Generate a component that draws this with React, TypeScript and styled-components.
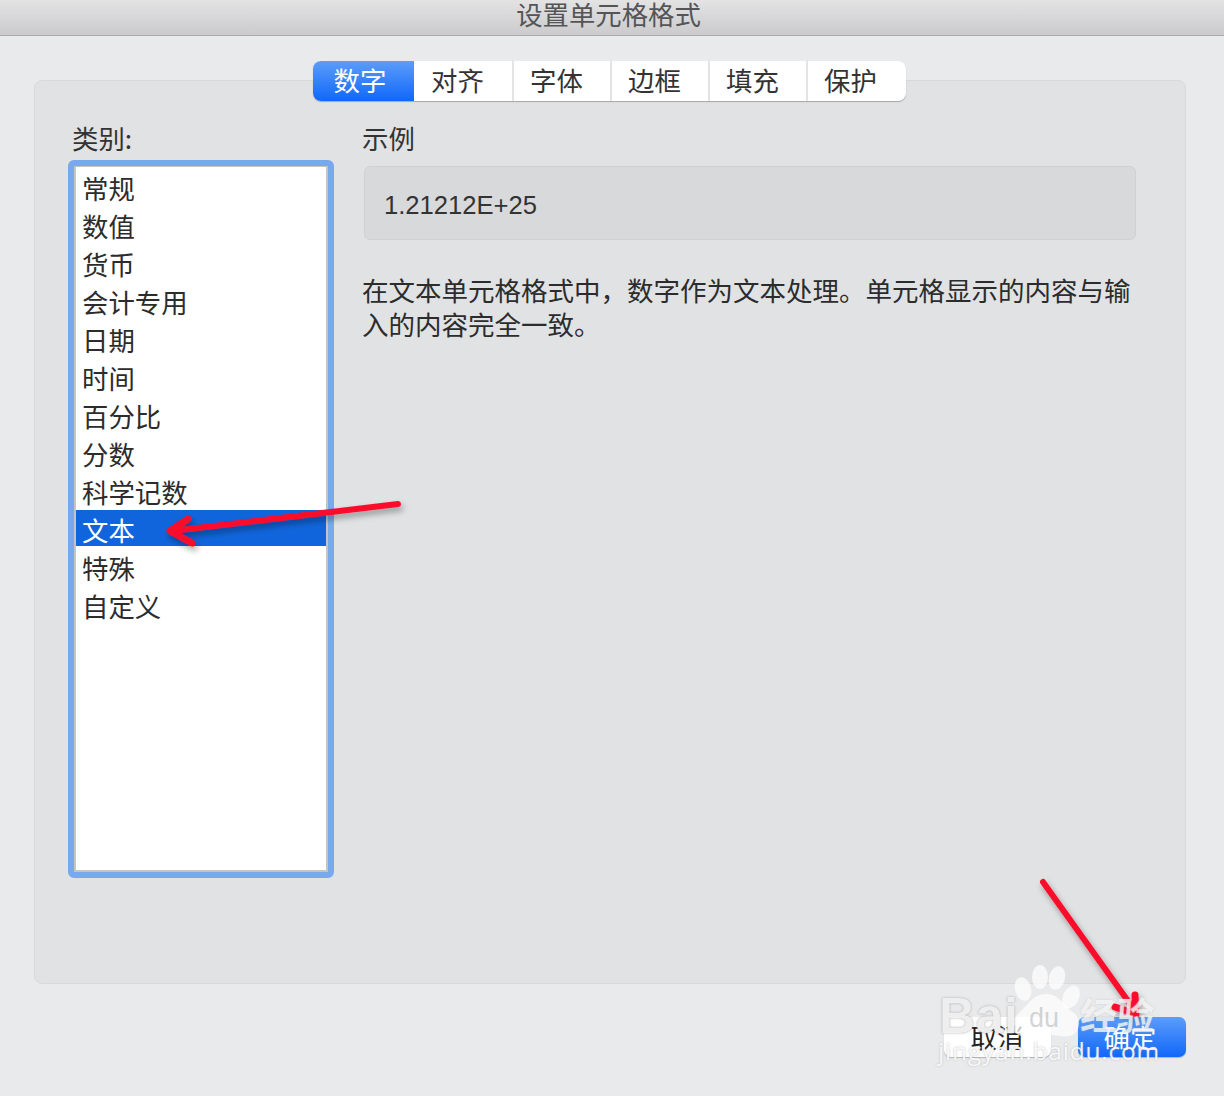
import React from "react";
import styled, { createGlobalStyle } from "styled-components";

const CJK = `"Noto Sans CJK SC", "Noto Sans", sans-serif`;

const Global = createGlobalStyle`
  html, body { margin: 0; padding: 0; background: #e9eaec; }
  body { font-family: "Liberation Sans", ${CJK}; color: #2a2a2a; }
`;

const Page = styled.div`
  position: relative;
  width: 1224px;
  height: 1096px;
  overflow: hidden;
  background: #e9eaec;
`;

const TitleBar = styled.header`
  height: 35px;
  padding-right: 7px;
  border-bottom: 1px solid #a9a9aa;
  background: linear-gradient(#e3e3e4, #cbcbcd);
  display: flex;
  justify-content: center;
  align-items: flex-start;
  font: 26.4px/28px ${CJK};
  color: #555557;
`;

const Content = styled.div`
  padding: 25px 38px 0 34px;
`;

const Tabs = styled.nav`
  position: relative;
  z-index: 1;
  width: 593px;
  height: 40px;
  margin-left: 279px;
  display: flex;
  border-radius: 8px;
  background: #fff;
  box-shadow: 0 1px 1px 0 #a8a8a8;
`;

const Tab = styled.div<{ $active?: boolean; $w: number }>`
  width: ${(p) => p.$w}px;
  box-sizing: border-box;
  display: flex;
  align-items: center;
  justify-content: center;
  padding: 0 ${(p) => (p.$active ? 7 : 11)}px 3px 0;
  font: 26.4px/34px ${CJK};
  color: ${(p) => (p.$active ? "#fff" : "#333")};
  background: ${(p) => (p.$active ? "linear-gradient(#5c9dfa, #1067f9)" : "transparent")};
  border-radius: ${(p) => (p.$active ? "8px 0 0 8px" : "0")};
  border-right: ${(p) => (p.$active ? "none" : "2px solid #e4e4e5")};
  &:last-child { border-right: none; padding-right: 13px; }
`;

const Panel = styled.section`
  margin-top: -21px;
  width: 1152px;
  height: 904px;
  box-sizing: border-box;
  background: #e1e2e4;
  border: 1px solid #d8d9db;
  border-radius: 8px;
  padding: 42px 49px 0 33px;
  display: flex;
`;

const LeftColumn = styled.div`
  width: 266px;
  flex: none;
  margin-right: 28px;
`;

const Label = styled.div`
  font: 26.4px/30px ${CJK};
  color: #333;
  padding-left: 4px;
  height: 37px;
`;

const ListBox = styled.div`
  width: 266px;
  height: 718px;
  box-sizing: border-box;
  border: 6px solid #7aa8ee;
  border-radius: 6px;
`;

const ListInner = styled.div`
  height: 100%;
  box-sizing: border-box;
  background: #fff;
  border: 2px solid #c4c4c4;
  border-top-width: 1px;
`;

const Row = styled.div<{ $selected?: boolean }>`
  height: 38px;
  box-sizing: border-box;
  border-top: 1px solid transparent;
  border-bottom: 1px solid transparent;
  background-clip: padding-box;
  padding: 3px 0 0 6px;
  font: 26.4px/33px ${CJK};
  color: ${(p) => (p.$selected ? "#fff" : "#2c2c2c")};
  background-color: ${(p) => (p.$selected ? "#1165dc" : "transparent")};
`;

const RightColumn = styled.div`
  width: 774px;
  flex: none;
`;

const SampleLabel = styled(Label)`
  padding-left: 0;
  height: 43px;
`;

const SampleBox = styled.div`
  margin-left: 2px;
  height: 74px;
  box-sizing: border-box;
  background: #d8d9db;
  border: 1px solid #d0d1d3;
  border-radius: 6px;
  padding: 4px 0 0 19px;
  display: flex;
  align-items: center;
  font: 25.6px/30px "Liberation Sans", sans-serif;
  color: #333;
`;

const Description = styled.p`
  margin: 33px 0 0;
  width: 774px;
  font: 26.5px/34px ${CJK};
  color: #2c2c2c;
`;

const Footer = styled.footer`
  margin-top: 33px;
  display: flex;
  justify-content: flex-end;
  gap: 27px;
`;

const Button = styled.div<{ $primary?: boolean }>`
  width: ${(p) => (p.$primary ? 108 : 107)}px;
  height: 40px;
  padding: 0 ${(p) => (p.$primary ? 4 : 1)}px 1px 0;
  box-sizing: border-box;
  border-radius: 7px;
  display: flex;
  align-items: center;
  justify-content: center;
  font: 26.4px/36px ${CJK};
  color: ${(p) => (p.$primary ? "#fff" : "#222")};
  background: ${(p) => (p.$primary ? "linear-gradient(#5c9dfa, #1067f9)" : "#fff")};
  box-shadow: 0 1px 1px 0 #b4b4b4;
`;

const Annotations = styled.svg`
  position: absolute;
  inset: 0;
  width: 1224px;
  height: 1096px;
  pointer-events: none;
`;

const WatermarkLogo = styled.div`
  position: absolute;
  left: 939px;
  top: 986px;
  font: 700 50px/60px "Liberation Sans", sans-serif;
  letter-spacing: 0.5px;
  color: rgba(255, 255, 255, 0.82);
  text-shadow: 0 0 1px rgba(150, 150, 150, 0.8), 0 0 3px rgba(170, 170, 170, 0.6);
`;

const WatermarkDu = styled.div`
  position: absolute;
  left: 1029px;
  top: 1001px;
  font: 400 27px/34px "Liberation Sans", sans-serif;
  color: rgba(170, 170, 170, 0.5);
`;

const WatermarkJing = styled.div`
  position: absolute;
  left: 1080px;
  top: 989px;
  font: 700 37px/50px ${CJK};
  color: rgba(255, 255, 255, 0.72);
  text-shadow: 0 0 2px rgba(170, 170, 170, 0.5);
`;

const WatermarkUrl = styled.div`
  position: absolute;
  left: 938px;
  top: 1033px;
  font: 24.5px/36px "Open Sans", sans-serif;
  letter-spacing: 0.8px;
  color: rgba(255, 255, 255, 0.88);
  text-shadow: 0 0 2px rgba(160, 160, 160, 0.7);
`;

const categories = ["常规", "数值", "货币", "会计专用", "日期", "时间", "百分比", "分数", "科学记数", "文本", "特殊", "自定义"];
const tabs: [string, number][] = [["数字", 101], ["对齐", 100], ["字体", 98], ["边框", 98], ["填充", 98], ["保护", 98]];

export default function App() {
  return (
    <Page>
      <Global />
      <TitleBar>设置单元格格式</TitleBar>
      <Content>
        <Tabs>
          {tabs.map(([t, w], i) => (
            <Tab key={t} $active={i === 0} $w={w}>{t}</Tab>
          ))}
        </Tabs>
        <Panel>
          <LeftColumn>
            <Label>类别:</Label>
            <ListBox>
              <ListInner>
                {categories.map((c) => (
                  <Row key={c} $selected={c === "文本"}>{c}</Row>
                ))}
              </ListInner>
            </ListBox>
          </LeftColumn>
          <RightColumn>
            <SampleLabel>示例</SampleLabel>
            <SampleBox>1.21212E+25</SampleBox>
            <Description>在文本单元格格式中，数字作为文本处理。单元格显示的内容与输入的内容完全一致。</Description>
          </RightColumn>
        </Panel>
        <Footer>
          <Button>取消</Button>
          <Button $primary>确定</Button>
        </Footer>
      </Content>
      <Annotations viewBox="0 0 1224 1096">
        <defs>
          <filter id="sh" x="-20%" y="-20%" width="140%" height="140%">
            <feDropShadow dx="2" dy="4" stdDeviation="3" floodColor="#000" floodOpacity="0.35" />
          </filter>
        </defs>
        <g fill="none" stroke="#fa0f2c" strokeLinecap="round" strokeLinejoin="round" filter="url(#sh)">
          <path d="M398 504 L172 531" strokeWidth="6" />
          <path d="M188 519 L170 531 L192 543" strokeWidth="7" />
          <path d="M1043 882 L1133 1008" strokeWidth="6" />
          <path d="M1135 995 L1136 1014 L1115 1007" strokeWidth="7" />
        </g>
        <g fill="rgba(255,255,255,0.72)">
          <ellipse cx="1023" cy="989" rx="8" ry="12" transform="rotate(-15 1023 989)" />
          <ellipse cx="1040" cy="977" rx="8" ry="12" />
          <ellipse cx="1057" cy="978" rx="8" ry="12" transform="rotate(15 1057 978)" />
          <ellipse cx="1071" cy="997" rx="8" ry="12" transform="rotate(25 1071 997)" />
        </g>
        <path
          d="M1046 994 C1032 994 1028 1006 1018 1014 C1006 1024 1014 1040 1031 1036 C1041 1034 1051 1034 1061 1036 C1078 1040 1084 1022 1074 1013 C1064 1006 1060 994 1046 994 Z"
          fill="rgba(255,255,255,0.72)"
        />
      </Annotations>
      <WatermarkLogo>Bai</WatermarkLogo>
      <WatermarkDu>du</WatermarkDu>
      <WatermarkJing>经验</WatermarkJing>
      <WatermarkUrl>jingyan.baidu.com</WatermarkUrl>
    </Page>
  );
}
